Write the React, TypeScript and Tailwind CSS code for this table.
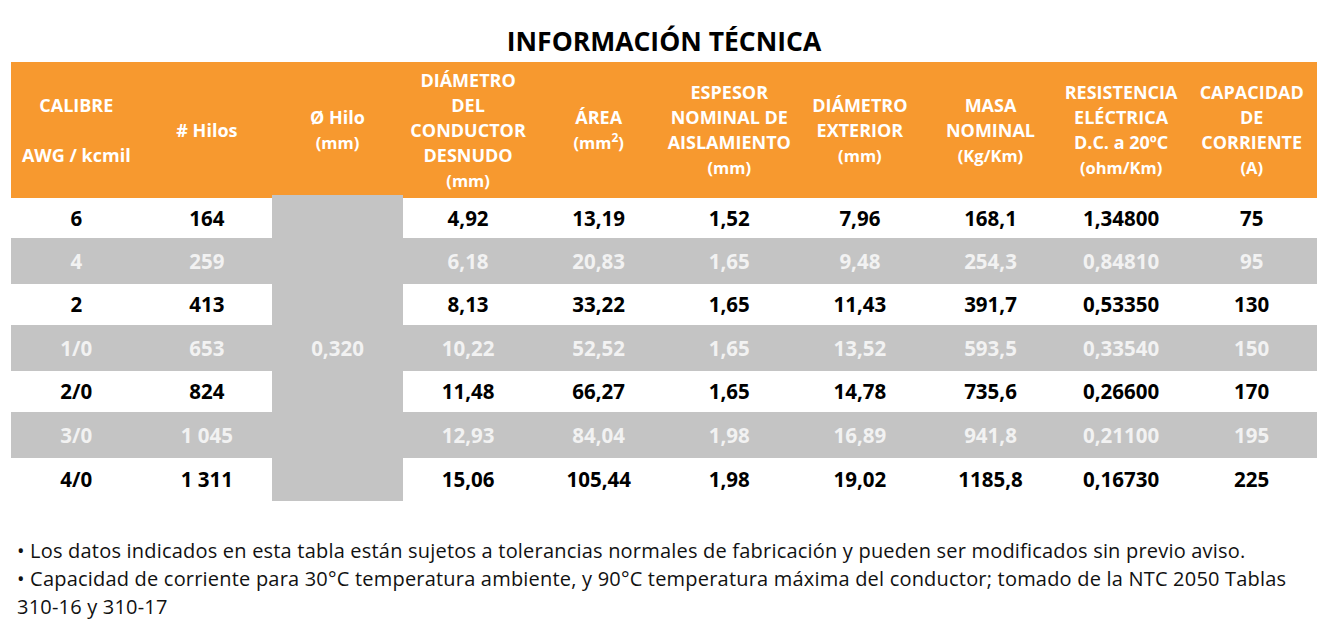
import React from "react";

const rows: string[][] = [
  ["6", "164", "4,92", "13,19", "1,52", "7,96", "168,1", "1,34800", "75"],
  ["4", "259", "6,18", "20,83", "1,65", "9,48", "254,3", "0,84810", "95"],
  ["2", "413", "8,13", "33,22", "1,65", "11,43", "391,7", "0,53350", "130"],
  ["1/0", "653", "10,22", "52,52", "1,65", "13,52", "593,5", "0,33540", "150"],
  ["2/0", "824", "11,48", "66,27", "1,65", "14,78", "735,6", "0,26600", "170"],
  ["3/0", "1 045", "12,93", "84,04", "1,98", "16,89", "941,8", "0,21100", "195"],
  ["4/0", "1 311", "15,06", "105,44", "1,98", "19,02", "1185,8", "0,16730", "225"],
];

function Main({ children }: { children: React.ReactNode }) {
  return <div className="text-[18px] leading-[25px]">{children}</div>;
}
function Sub({ children }: { children: React.ReactNode }) {
  return <div className="text-[16.5px] leading-[25px]">{children}</div>;
}

function HeadCell({ children }: { children: React.ReactNode }) {
  return (
    <div className="flex flex-col items-center justify-center text-center text-white font-bold">
      {children}
    </div>
  );
}

export default function App() {
  return (
    <div className="w-[1328px] h-[640px] bg-white font-['Open_Sans',sans-serif] text-black overflow-hidden">
      <div className="pt-[23px] pb-[3px] text-center text-[26.5px] leading-[36px] font-bold">
        INFORMACIÓN TÉCNICA
      </div>

      <div className="mx-[11px]">
        <div className="grid grid-cols-10 h-[136px] bg-[#f7992f]">
          <HeadCell>
            <Main>CALIBRE</Main>
            <Main>&nbsp;</Main>
            <Main>AWG / kcmil</Main>
          </HeadCell>
          <HeadCell>
            <Main># Hilos</Main>
          </HeadCell>
          <HeadCell>
            <Main>Ø Hilo</Main>
            <Sub>(mm)</Sub>
          </HeadCell>
          <HeadCell>
            <Main>DIÁMETRO</Main>
            <Main>DEL</Main>
            <Main>CONDUCTOR</Main>
            <Main>DESNUDO</Main>
            <Sub>(mm)</Sub>
          </HeadCell>
          <HeadCell>
            <Main>ÁREA</Main>
            <Sub>
              (mm<sup className="text-[12px] relative -top-[7px]">2</sup>)
            </Sub>
          </HeadCell>
          <HeadCell>
            <Main>ESPESOR</Main>
            <Main>NOMINAL DE</Main>
            <Main>AISLAMIENTO</Main>
            <Sub>(mm)</Sub>
          </HeadCell>
          <HeadCell>
            <Main>DIÁMETRO</Main>
            <Main>EXTERIOR</Main>
            <Sub>(mm)</Sub>
          </HeadCell>
          <HeadCell>
            <Main>MASA</Main>
            <Main>NOMINAL</Main>
            <Sub>(Kg/Km)</Sub>
          </HeadCell>
          <HeadCell>
            <Main>RESISTENCIA</Main>
            <Main>ELÉCTRICA</Main>
            <Main>D.C. a 20ºC</Main>
            <Sub>(ohm/Km)</Sub>
          </HeadCell>
          <HeadCell>
            <Main>CAPACIDAD</Main>
            <Main>DE</Main>
            <Main>CORRIENTE</Main>
            <Sub>(A)</Sub>
          </HeadCell>
        </div>

        <div className="grid grid-cols-10 grid-rows-[40px_46px_41px_46px_41px_46px_43px] text-[20.5px] font-bold">
          <div className="col-start-3 row-start-1 row-span-7 -mt-[3px] bg-[#c4c4c4] flex items-center justify-center text-[#f2f2f2]">
            0,320
          </div>
          {rows.map((r, ri) => {
            const gray = ri % 2 === 1;
            return r.map((v, ci) => (
              <div
                key={`${ri}-${ci}`}
                className={
                  gray
                    ? "flex items-center justify-center bg-[#c4c4c4] text-[#f2f2f2]"
                    : "flex items-center justify-center bg-white text-black"
                }
              >
                {v}
              </div>
            ));
          })}
        </div>
      </div>

      <div className="mt-[36px] pl-[17px] text-[20px] leading-[28px] tracking-[0.2px] text-[#111]">
        <div>
          • Los datos indicados en esta tabla están sujetos a tolerancias normales de fabricación y pueden ser modificados sin previo aviso.
        </div>
        <div>
          • Capacidad de corriente para 30°C temperatura ambiente, y 90°C temperatura máxima del conductor; tomado de la NTC 2050 Tablas
          <br />
          310-16 y 310-17
        </div>
      </div>
    </div>
  );
}
